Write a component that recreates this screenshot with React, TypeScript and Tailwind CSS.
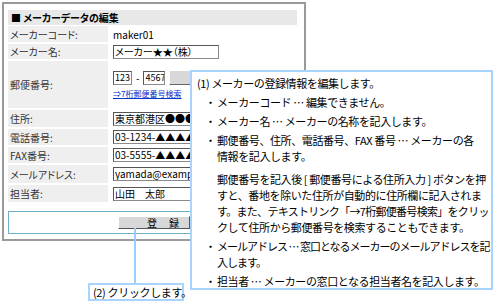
const jp = "font-['MS_UI_Gothic','Noto_Sans_CJK_JP',sans-serif]";
const palt = "[font-feature-settings:'palt']";

const Field = ({ w, value, size = "text-[10px]" }: { w: string; value: string; size?: string }) => (
  <div
    className={`${w} ${size} flex h-[14px] shrink-0 items-center overflow-hidden whitespace-nowrap border border-[#8a8a8a] border-t-[#555] border-l-[#555] bg-white pl-[1px] leading-[12px] text-black ${palt}`}
  >
    {value}
  </div>
);

const Row = ({
  label,
  h,
  children,
}: {
  label: string;
  h: string;
  children: React.ReactNode;
}) => (
  <div className={`flex gap-[2px] ${h}`}>
    <div className={`flex w-[100px] shrink-0 items-center bg-[#efefef] pl-[2px] text-[10px] text-[#333] ${palt}`}>
      {label}
    </div>
    <div className="flex min-w-0 flex-1 flex-col justify-center bg-white pl-[3px]">
      {children}
    </div>
  </div>
);

const Bullet = ({ lines, tight = false }: { lines: string[]; tight?: boolean }) => (
  <div className="flex">
    <span className="w-[20px] shrink-0 pl-[8px]">・</span>
    <div className={`flex flex-col ${tight ? "tracking-[-1px]" : ""}`}>
      {lines.map((l) => (
        <span key={l} className="h-[16px] whitespace-nowrap">
          {l}
        </span>
      ))}
    </div>
  </div>
);

export default function App() {
  return (
    <div className={`relative h-[305px] w-[496px] overflow-hidden bg-white ${jp}`}>
      {/* form window */}
      <div className="ml-[2px] mt-[2px] h-[239px] w-[304px] border-2 border-[#9a9a9a] bg-white pl-[4px] pr-[7px] pt-[6px]">
        <div className={`flex h-[15px] items-center bg-[#e8e8e8] pl-[3px] text-[10px] font-bold text-black ${palt}`}>
          ■ メーカーデータの編集
        </div>
        <div className="mt-[1px] flex flex-col gap-[2px]">
          <Row label="メーカーコード:" h="h-[16px]">
            <span className="text-[10px] text-black">maker01</span>
          </Row>
          <Row label="メーカー名:" h="h-[15px]">
            <Field w="w-[106px]" value="メーカー★★（株）" />
          </Row>
          <Row label="郵便番号:" h="h-[47px]">
            <div className="flex items-center gap-[4px]">
              <Field w="w-[19px]" value="123" size="text-[9px]" />
              <span className="text-[10px]">-</span>
              <Field w="w-[22px]" value="4567" size="text-[9px]" />
              <div className="flex h-[15px] w-[150px] shrink-0 items-center justify-center whitespace-nowrap border border-[#fff] border-b-[#666] border-r-[#666] bg-[#d8d8d8] text-[10px]">
                郵便番号による住所入力
              </div>
            </div>
            <span className="mt-[4px] text-[8px] leading-[10px] text-[#0033cc] underline">
              ⇒7桁郵便番号検索
            </span>
          </Row>
          <Row label="住所:" h="h-[17px]">
            <Field w="w-[110px]" value="東京都港区●●●-1-1" />
          </Row>
          <Row label="電話番号:" h="h-[16px]">
            <Field w="w-[110px]" value="03-1234-▲▲▲▲" />
          </Row>
          <Row label="FAX番号:" h="h-[16px]">
            <Field w="w-[110px]" value="03-5555-▲▲▲▲" />
          </Row>
          <Row label="メールアドレス:" h="h-[18px]">
            <Field w="w-[110px]" value="yamada@example.co.jp" />
          </Row>
          <Row label="担当者:" h="h-[17px]">
            <Field w="w-[110px]" value="山田　太郎" />
          </Row>
        </div>
        <div className="mt-[9px] flex h-[23px] items-center border border-[#6fb0c8] pl-[109px]">
          <div className="flex h-[13px] w-[72px] items-center justify-center gap-[12px] border border-[#fff] border-b-[#555] border-r-[#555] bg-[#d8d8d8] pl-[18px] text-[10px]">
            <span>登</span>
            <span>録</span>
          </div>
        </div>
      </div>

      {/* connector for (2) */}
      <div className="absolute left-[134px] top-[228px] h-[56px] w-[2px] bg-[#99ccff]" />

      {/* callout (1) */}
      <div className="absolute left-[190px] top-[70px] h-[220px] w-[303px] border-2 border-[#a8d4ff] bg-white pl-[5px] pt-[3px] text-[11px] leading-[16px] tracking-[-0.4px] text-black">
        <div className="h-[19px] whitespace-nowrap">(1) メーカーの登録情報を編集します。</div>
        <div className="flex flex-col gap-[3px]">
          <Bullet lines={["メーカーコード … 編集できません。"]} />
          <Bullet lines={["メーカー名 … メーカーの名称を記入します。"]} />
          <Bullet lines={["郵便番号、住所、電話番号、FAX 番号 … メーカーの各", "情報を記入します。"]} />
          <div className="mt-[4px] flex flex-col pl-[20px]">
            <span className="h-[16px] whitespace-nowrap">郵便番号を記入後 [ 郵便番号による住所入力 ] ボタンを押</span>
            <span className="h-[16px] whitespace-nowrap">すと、番地を除いた住所が自動的に住所欄に記入されま</span>
            <span className="h-[16px] whitespace-nowrap tracking-[-0.7px]">す。また、テキストリンク「→7桁郵便番号検索」をクリッ</span>
            <span className="h-[16px] whitespace-nowrap">クして住所から郵便番号を検索することもできます。</span>
          </div>
          <Bullet tight lines={["メールアドレス … 窓口となるメーカーのメールアドレスを記", "入します。"]} />
          <Bullet lines={["担当者 … メーカーの窓口となる担当者名を記入します。"]} />
        </div>
      </div>

      {/* callout (2) */}
      <div className="absolute left-[88px] top-[283px] flex h-[18px] w-[96px] items-center whitespace-nowrap border-2 border-[#a8d4ff] bg-white pl-[3px] text-[11px] tracking-[-0.35px] text-black">
        (2) クリックします。
      </div>
    </div>
  );
}
